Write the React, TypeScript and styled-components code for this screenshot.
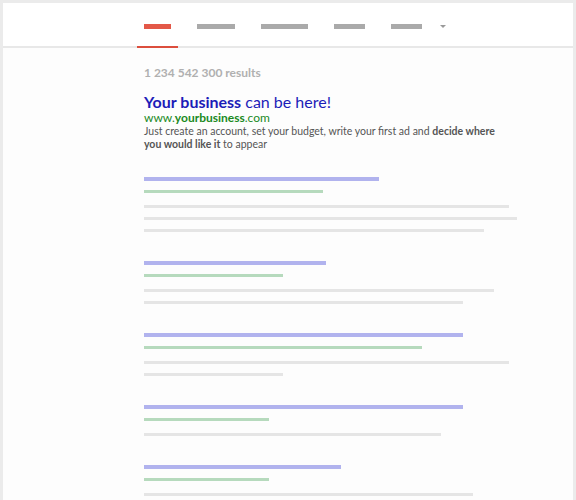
import styled, { createGlobalStyle } from 'styled-components';

const GlobalStyle = createGlobalStyle`
  html, body {
    margin: 0;
    padding: 0;
    background: #ffffff;
  }
  body {
    font-family: Lato, "Open Sans", sans-serif;
  }
`;

const Frame = styled.div`
  height: 497px;
  border: 3px solid #ebebeb;
  border-bottom: none;
  background: #fdfdfd;
  overflow: hidden;
`;

const Header = styled.header`
  height: 43px;
  display: flex;
  align-items: stretch;
  padding-left: 134px;
  background: #ffffff;
  border-bottom: 2px solid #e8e8e8;
`;

const Tab = styled.div<{ $active?: boolean }>`
  display: flex;
  align-items: flex-start;
  padding: 21px 7px 0;
  margin-bottom: -2px;
  border-bottom: 2px solid ${(p) => (p.$active ? '#dc4e3d' : 'transparent')};
`;

const TabGroup = styled.div`
  display: flex;
  align-items: flex-start;
  gap: 26px;
  padding: 21px 0 0 19px;
`;

const TabBar = styled.span<{ $w: number; $red?: boolean }>`
  display: block;
  flex: none;
  width: ${(p) => p.$w}px;
  height: 5px;
  background: ${(p) => (p.$red ? '#e35848' : '#aaaaaa')};
`;

const Caret = styled.span`
  display: block;
  margin: 1px 0 0 -8px;
  width: 0;
  height: 0;
  border-left: 3px solid transparent;
  border-right: 3px solid transparent;
  border-top: 3px solid #9a9a9a;
`;

const Content = styled.main`
  padding: 17px 0 0 141px;
  width: 373px;
`;

const Count = styled.div`
  font-size: 12px;
  line-height: 15px;
  font-weight: 700;
  color: #b0b0b0;
`;

const Ad = styled.section`
  margin-top: 12px;
`;

const AdTitle = styled.h2`
  margin: 0;
  font-size: 16px;
  line-height: 19px;
  font-weight: 400;
  color: #1c1cb8;
  b {
    font-weight: 700;
  }
`;

const AdUrl = styled.div`
  font-size: 12px;
  line-height: 13px;
  color: #1a8a1e;
  b {
    font-weight: 700;
  }
`;

const AdText = styled.p`
  margin: 1px 0 0;
  width: 370px;
  font-size: 10.5px;
  line-height: 13px;
  color: #555555;
  b {
    font-weight: 700;
  }
`;

const Results = styled.div`
  margin-top: 26px;
  display: flex;
  flex-direction: column;
  gap: 29px;
`;

const Result = styled.div`
  display: flex;
  flex-direction: column;
`;

const TitleLine = styled.span<{ $w: number }>`
  display: block;
  width: ${(p) => p.$w}px;
  height: 4px;
  background: #b1b3ee;
`;

const UrlLine = styled.span<{ $w: number }>`
  display: block;
  width: ${(p) => p.$w}px;
  height: 3px;
  margin-top: 9px;
  background: #b6dabd;
`;

const TextLines = styled.div`
  display: flex;
  flex-direction: column;
  gap: 9px;
  margin-top: 12px;
`;

const TextLine = styled.span<{ $w: number }>`
  display: block;
  width: ${(p) => p.$w}px;
  height: 3px;
  background: #e5e5e5;
`;

const results = [
  { title: 235, url: 179, lines: [365, 373, 340] },
  { title: 182, url: 139, lines: [350, 319] },
  { title: 319, url: 278, lines: [365, 139] },
  { title: 319, url: 125, lines: [297] },
  { title: 197, url: 125, lines: [329] },
];

const tabs = [38, 47, 31, 31];

export default function App() {
  return (
    <>
      <GlobalStyle />
      <Frame>
        <Header>
          <Tab $active>
            <TabBar $w={27} $red />
          </Tab>
          <TabGroup>
            {tabs.map((w, i) => (
              <TabBar key={i} $w={w} />
            ))}
            <Caret />
          </TabGroup>
        </Header>
        <Content>
          <Count>1 234 542 300 results</Count>
          <Ad>
            <AdTitle>
              <b>Your business</b> can be here!
            </AdTitle>
            <AdUrl>
              www.<b>yourbusiness</b>.com
            </AdUrl>
            <AdText>
              Just create an account, set your budget, write your first ad and{' '}
              <b>decide where you would like it</b> to appear
            </AdText>
          </Ad>
          <Results>
            {results.map((r, i) => (
              <Result key={i}>
                <TitleLine $w={r.title} />
                <UrlLine $w={r.url} />
                <TextLines>
                  {r.lines.map((w, j) => (
                    <TextLine key={j} $w={w} />
                  ))}
                </TextLines>
              </Result>
            ))}
          </Results>
        </Content>
      </Frame>
    </>
  );
}
